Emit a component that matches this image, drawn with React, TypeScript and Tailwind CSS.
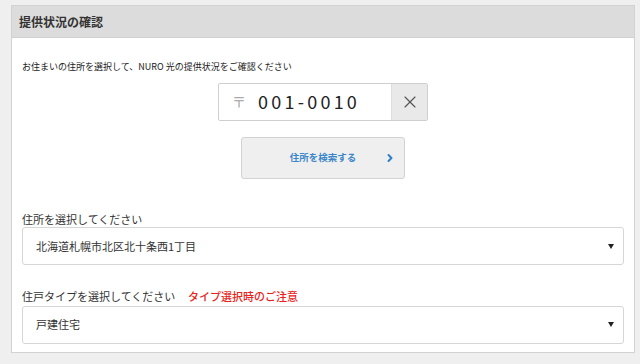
import { X, ChevronRight } from "lucide-react";

const font = { fontFamily: '"Noto Sans CJK JP", "Noto Sans", sans-serif' };

function SelectBox({ value }: { value: string }) {
  return (
    <div className="flex h-[38px] items-center justify-between rounded-[3px] border border-[#d6d6d6] bg-white pl-[13px] pr-[9px]">
      <span className="text-[11px] text-[#333]">{value}</span>
      <span className="h-0 w-0 border-x-[3.5px] border-t-[5px] border-x-transparent border-t-[#222]" />
    </div>
  );
}

export default function App() {
  return (
    <div className="h-[364px] w-[640px] bg-[#efefef] pt-[5px] pl-[11px]" style={font}>
      <div className="w-[624px] border border-[#d2d2d2] bg-white">
        <div className="flex h-[32px] items-center border-b border-[#cfcfcf] bg-[#dcdcdc] px-[7px]">
          <h1 className="text-[12px] font-bold text-[#333]">提供状況の確認</h1>
        </div>
        <div className="px-[10px] pb-[8px]">
          <p className="mt-[22px] text-[9px] text-[#222]">
            お住まいの住所を選択して、NURO 光の提供状況をご確認ください
          </p>

          <div className="mt-[9px] flex justify-center">
            <div className="flex h-[38px] w-[210px] overflow-hidden rounded-[2px] border border-[#cfcfcf] bg-white">
              <div className="flex flex-1 items-center pl-[13px]">
                <span className="text-[14px] text-[#aaa]">〒</span>
                <span className="ml-[12px] text-[18px] tracking-[0.18em] text-[#222]">001-0010</span>
              </div>
              <div className="flex w-[36px] items-center justify-center border-l border-[#dedede] bg-[#e9e9e9]">
                <X className="h-[20px] w-[20px] text-[#555]" strokeWidth={1.4} />
              </div>
            </div>
          </div>

          <div className="mt-[16px] flex justify-center">
            <div className="relative flex h-[42px] w-[164px] items-center justify-center rounded-[3px] border border-[#d2d2d2] bg-[#efefef]">
              <span className="text-[9.5px] font-bold text-[#3a86c8]">住所を検索する</span>
              <ChevronRight className="absolute right-[8px] top-1/2 h-[12px] w-[12px] -translate-y-1/2 text-[#2f7fc4]" strokeWidth={4} />
            </div>
          </div>

          <div className="mt-[32px] text-[11px] text-[#333]">住所を選択してください</div>
          <SelectBox value="北海道札幌市北区北十条西1丁目" />

          <div className="mt-[23px] flex items-center text-[11px]">
            <span className="w-[166px] text-[#333]">住戸タイプを選択してください</span>
            <span className="font-medium text-[#e8231b]">タイプ選択時のご注意</span>
          </div>
          <div className="mt-[1px]">
            <SelectBox value="戸建住宅" />
          </div>
        </div>
      </div>
    </div>
  );
}
